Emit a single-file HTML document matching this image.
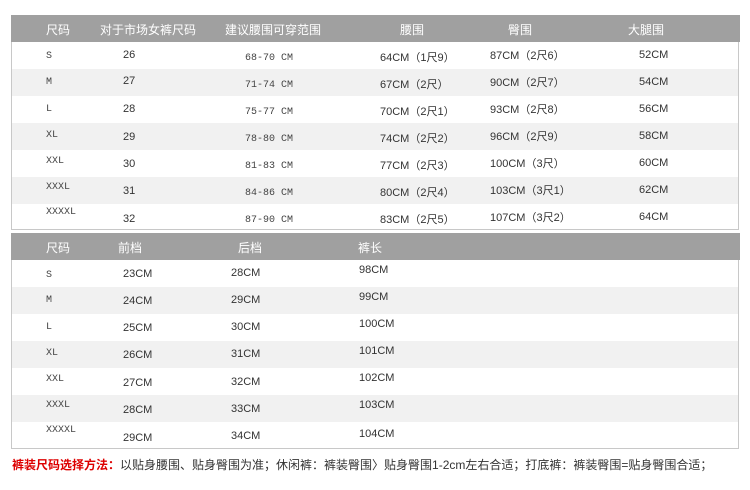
<!DOCTYPE html>
<html><head><meta charset="utf-8"><style>
body{margin:0;width:750px;height:490px;background:#fff;position:relative;font-family:"Liberation Sans","Noto Sans CJK SC",sans-serif;font-size:11px;color:#333;overflow:hidden}
.t{position:absolute;left:11px;width:728px;border:1px solid #c8c8c8;border-top:none;box-sizing:border-box}
.h{position:absolute;left:11px;width:729px;height:27px;background:#a0a0a0;color:#fff;font-size:12px}
.r{position:absolute;left:0;width:100%;height:27px}
.g{background:#f1f1f1}
span{position:absolute;white-space:nowrap}
.h span{top:6px}
.m{font-family:"Liberation Mono",monospace;font-size:10px;color:#444}
.note{position:absolute;left:12px;top:456px;font-size:12px;color:#333}
.note b{color:#d00;font-weight:bold}
</style></head><body>
<div class="h" style="top:15px">
<span style="left:35px">尺码</span><span style="left:89px">对于市场女裤尺码</span><span style="left:214px">建议腰围可穿范围</span><span style="left:389px">腰围</span><span style="left:497px">臀围</span><span style="left:617px">大腿围</span></div>
<div class="t" style="top:42px;height:188px">
<div class="r" style="top:0"><span class="m" style="left:34px;top:9px">S</span><span style="left:111px;top:7px">26</span><span class="m" style="left:233px;top:11px">68-70 CM</span><span style="left:368px;top:7px">64CM（1尺9）</span><span style="left:478px;top:5px">87CM（2尺6）</span><span style="left:627px;top:7px">52CM</span></div>
<div class="r g" style="top:27px"><span class="m" style="left:34px;top:8px">M</span><span style="left:111px;top:6px">27</span><span class="m" style="left:233px;top:11px">71-74 CM</span><span style="left:368px;top:7px">67CM（2尺）</span><span style="left:478px;top:5px">90CM（2尺7）</span><span style="left:627px;top:7px">54CM</span></div>
<div class="r" style="top:54px"><span class="m" style="left:34px;top:8px">L</span><span style="left:111px;top:7px">28</span><span class="m" style="left:233px;top:11px">75-77 CM</span><span style="left:368px;top:7px">70CM（2尺1）</span><span style="left:478px;top:5px">93CM（2尺8）</span><span style="left:627px;top:7px">56CM</span></div>
<div class="r g" style="top:81px"><span class="m" style="left:34px;top:7px">XL</span><span style="left:111px;top:8px">29</span><span class="m" style="left:233px;top:11px">78-80 CM</span><span style="left:368px;top:7px">74CM（2尺2）</span><span style="left:478px;top:5px">96CM（2尺9）</span><span style="left:627px;top:7px">58CM</span></div>
<div class="r" style="top:108px"><span class="m" style="left:34px;top:6px">XXL</span><span style="left:111px;top:8px">30</span><span class="m" style="left:233px;top:11px">81-83 CM</span><span style="left:368px;top:7px">77CM（2尺3）</span><span style="left:478px;top:5px">100CM（3尺）</span><span style="left:627px;top:7px">60CM</span></div>
<div class="r g" style="top:135px"><span class="m" style="left:34px;top:5px">XXXL</span><span style="left:111px;top:8px">31</span><span class="m" style="left:233px;top:11px">84-86 CM</span><span style="left:368px;top:7px">80CM（2尺4）</span><span style="left:478px;top:5px">103CM（3尺1）</span><span style="left:627px;top:7px">62CM</span></div>
<div class="r" style="top:162px"><span class="m" style="left:34px;top:3px">XXXXL</span><span style="left:111px;top:9px">32</span><span class="m" style="left:233px;top:11px">87-90 CM</span><span style="left:368px;top:7px">83CM（2尺5）</span><span style="left:478px;top:5px">107CM（3尺2）</span><span style="left:627px;top:7px">64CM</span></div>
</div>
<div class="h" style="top:233px">
<span style="left:35px">尺码</span><span style="left:107px">前档</span><span style="left:227px">后档</span><span style="left:347px">裤长</span></div>
<div class="t" style="top:260px;height:189px">
<div class="r" style="top:0"><span class="m" style="left:34px;top:10px">S</span><span style="left:111px;top:8px">23CM</span><span style="left:219px;top:7px">28CM</span><span style="left:347px;top:4px">98CM</span></div>
<div class="r g" style="top:27px"><span class="m" style="left:34px;top:8px">M</span><span style="left:111px;top:8px">24CM</span><span style="left:219px;top:7px">29CM</span><span style="left:347px;top:4px">99CM</span></div>
<div class="r" style="top:54px"><span class="m" style="left:34px;top:8px">L</span><span style="left:111px;top:8px">25CM</span><span style="left:219px;top:7px">30CM</span><span style="left:347px;top:4px">100CM</span></div>
<div class="r g" style="top:81px"><span class="m" style="left:34px;top:7px">XL</span><span style="left:111px;top:8px">26CM</span><span style="left:219px;top:7px">31CM</span><span style="left:347px;top:4px">101CM</span></div>
<div class="r" style="top:108px"><span class="m" style="left:34px;top:6px">XXL</span><span style="left:111px;top:9px">27CM</span><span style="left:219px;top:8px">32CM</span><span style="left:347px;top:4px">102CM</span></div>
<div class="r g" style="top:135px"><span class="m" style="left:34px;top:5px">XXXL</span><span style="left:111px;top:9px">28CM</span><span style="left:219px;top:8px">33CM</span><span style="left:347px;top:4px">103CM</span></div>
<div class="r" style="top:162px"><span class="m" style="left:34px;top:3px">XXXXL</span><span style="left:111px;top:10px">29CM</span><span style="left:219px;top:8px">34CM</span><span style="left:347px;top:6px">104CM</span></div>
</div>
<div class="note"><b>裤装尺码选择方法：</b>以贴身腰围、贴身臀围为准；休闲裤：裤装臀围〉贴身臀围1-2cm左右合适；打底裤：裤装臀围=贴身臀围合适；</div>
</body></html>
